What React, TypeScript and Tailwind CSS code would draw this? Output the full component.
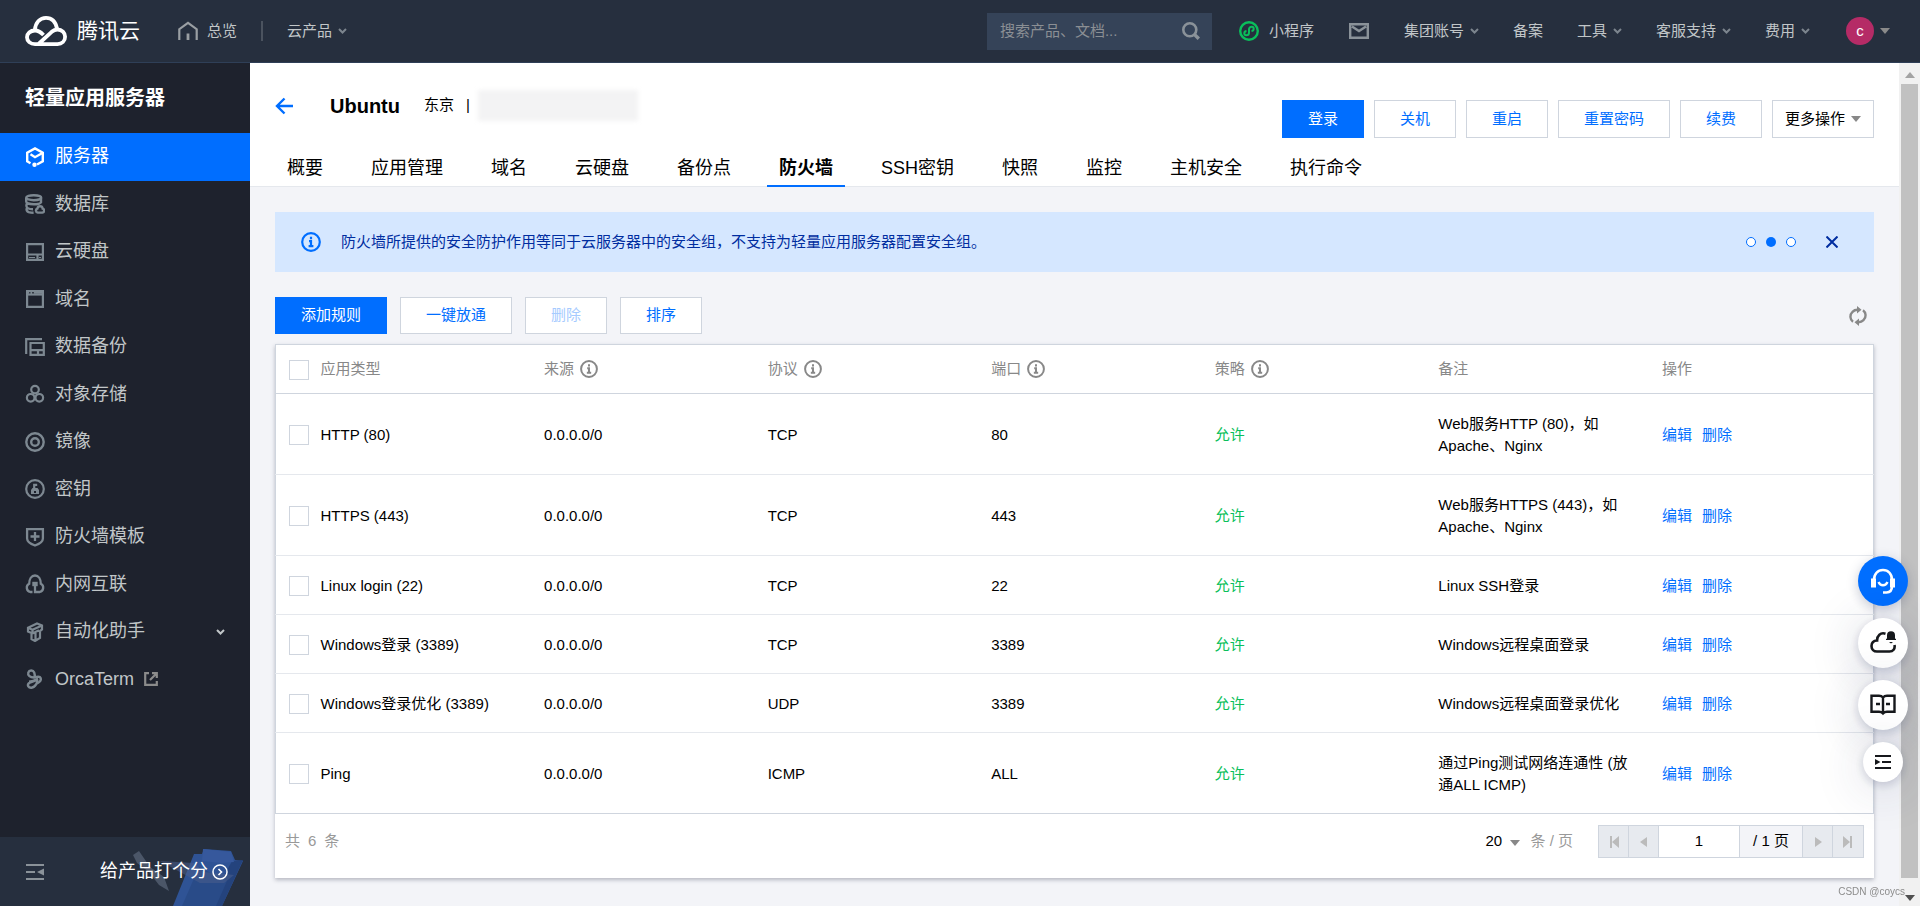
import { useState } from "react";
import type { ReactNode } from "react";

type Regla = {
  app: string;
  protocol: string;
  port: string;
  note: string;
};

const RULES: Regla[] = [
  { app: "HTTP (80)", protocol: "TCP", port: "80", note: "Web服务HTTP (80)，如 Apache、Nginx" },
  { app: "HTTPS (443)", protocol: "TCP", port: "443", note: "Web服务HTTPS (443)，如 Apache、Nginx" },
  { app: "Linux login (22)", protocol: "TCP", port: "22", note: "Linux SSH登录" },
  { app: "Windows登录 (3389)", protocol: "TCP", port: "3389", note: "Windows远程桌面登录" },
  { app: "Windows登录优化 (3389)", protocol: "UDP", port: "3389", note: "Windows远程桌面登录优化" },
  { app: "Ping", protocol: "ICMP", port: "ALL", note: "通过Ping测试网络连通性 (放通ALL ICMP)" },
];

const TABS = ["概要", "应用管理", "域名", "云硬盘", "备份点", "防火墙", "SSH密钥", "快照", "监控", "主机安全", "执行命令"];

const COLUMNS = [
  { label: "应用类型", info: false },
  { label: "来源", info: true },
  { label: "协议", info: true },
  { label: "端口", info: true },
  { label: "策略", info: true },
  { label: "备注", info: false },
  { label: "操作", info: false },
];

/* ---------- icons ---------- */

function Svg({ size = 20, box = 20, stroke = 2, children }: { size?: number; box?: number; stroke?: number; children: ReactNode }) {
  return (
    <svg width={size} height={size} viewBox={`0 0 ${box} ${box}`} fill="none" stroke="currentColor" strokeWidth={stroke} className="shrink-0" aria-hidden="true">
      {children}
    </svg>
  );
}

const ServerIcon = () => (
  <Svg stroke={2.4}>
    <path d="M5.500 16.200 2.200 14.300V5.700L10 1.400l7.800 4.300v8.600L12 17.500" />
    <path d="M5.500 7.300 10 10.200l7-4" />
    <circle cx="9.500" cy="17.800" r="2.200" fill="currentColor" stroke="none" />
  </Svg>
);
const DatabaseIcon = () => (
  <Svg stroke={2.4}>
    <ellipse cx="8.700" cy="3.700" rx="7.500" ry="2.500" />
    <path d="M1.200 4v3.500c0 1.600 3.400 2.800 7.600 2.800 3.400 0 6.400-.8 7.200-2V4M2 10c-.9.800-.8 3.400.8 4.200 1.500.8 3 1 5.200 1M1.800 14.500c-.6 1.500.2 3 1.800 3.600 1.500.5 3 .7 5 .7" />
    <path d="M12.800 18.600a2 2 0 0 1-.4-3.900c.2-1.500 1.200-2.400 2.600-2.400s2.500.9 2.700 2.400a2 2 0 0 1-.3 3.900z" />
  </Svg>
);
const DiskIcon = () => (
  <Svg stroke={2.2}>
    <path d="M2.100 2.100h15.800v15.800H2.100zM2 12.500h16M12.500 13v5" />
    <path d="M4 15.500h6M14 15.500h2" strokeWidth="1" />
  </Svg>
);
const DomainIcon = () => (
  <Svg stroke={2.2}>
    <path d="M2.100 2.100h15.800v15.800H2.100z" />
    <path d="M1 5.500h18" />
    <path d="M1 3h3M5.500 3.500h1.500M9 3h10" strokeWidth="3.500" />
  </Svg>
);
const BackupIcon = () => (
  <Svg stroke={2.2}>
    <path d="M1.200 17V2.100H17" />
    <path d="M5.500 6h13.300v11.800H5.500zM5.500 13.200h13M13 14v3" />
  </Svg>
);
const ObjectIcon = () => (
  <Svg stroke={2.2}>
    <circle cx="10" cy="5.600" r="3.800" />
    <circle cx="5.700" cy="13.800" r="3.800" />
    <circle cx="14.300" cy="13.800" r="3.800" />
  </Svg>
);
const ImageIcon = () => (
  <Svg stroke={2.4}>
    <circle cx="10" cy="10" r="8.700" />
    <circle cx="10" cy="10" r="3.800" />
  </Svg>
);
const KeyIcon = () => (
  <Svg stroke={2.2}>
    <circle cx="10" cy="10" r="8.800" />
    <path d="M9.200 10V5.800h3" />
    <path d="M6 15v-4l1.500-2h5l1.500 2v4H6zm3-3v2h2v-2z" fill="currentColor" fillRule="evenodd" stroke="none" />
  </Svg>
);
const ShieldIcon = () => (
  <Svg stroke={2.3}>
    <path d="M2.100 2.100h15.800v9.400c0 3.500-4 5.600-7.900 7-3.900-1.400-7.900-3.500-7.900-7zM10 5v9M5.500 9.500h9" />
  </Svg>
);
const NetworkIcon = () => (
  <Svg stroke={2.3}>
    <path d="M7.500 18H5.200a4.400 4.400 0 0 1-1-8.200C4.200 5 6.400 1.500 10 1.500S15.800 5 15.800 9.800a4.400 4.400 0 0 1-1 8.200H10v-6" />
    <path d="M7.300 7.800h5.400v4.400H7.300z" fill="currentColor" stroke="none" />
  </Svg>
);
const RobotIcon = () => (
  <Svg stroke={2.2}>
    <path d="M3 5.700 12 1.500l5 2v4L15 9v7l-5 3-3.500-1.800V11L3 9.500zM3 5.700l4.500 2L17 3.500M7.500 8v3.500L14 8.200M10.500 11v7" />
  </Svg>
);
const OrcaIcon = () => (
  <Svg stroke={2.4}>
    <path d="M9.500 8.500C5 8.800 2.500 6 3.300 3.600 4.200 1 8 .8 9.200 3.400c.9 2 .6 3.600.3 5.100zM9.500 8.500c3.500-1.200 5.500-1.300 6.200.6.600 2-1 4-3.700 5.300" />
    <path d="M4 12.800c3-.2 5.500-1 8-2.500 1 3-1.500 8-5.500 8.400-3 .3-4.500-2.500-2.800-4.300 1.500-1.500 4-1 8.300-4.100" />
  </Svg>
);

function Chevron({ className = "" }: { className?: string }) {
  return (
    <svg width="9" height="6" viewBox="0 0 9 6" fill="none" stroke="currentColor" strokeWidth="2" className={className} aria-hidden="true">
      <path d="m1 1 3.500 3.500L8 1" />
    </svg>
  );
}

function Triangle({ className = "" }: { className?: string }) {
  return (
    <svg width="10" height="6" viewBox="0 0 10 6" fill="currentColor" className={className} aria-hidden="true">
      <path d="M0 0h10L5 6z" />
    </svg>
  );
}

function InfoIcon({ size = 20 }: { size?: number }) {
  return (
    <Svg size={size} stroke={2.2}>
      <circle cx="10" cy="10" r="8.800" />
      <path d="M10 4.800v2.400M8 9.200h2v5M7.600 14.200h4.800" />
    </Svg>
  );
}

function Logo() {
  return (
    <svg width="42" height="30" viewBox="0 0 42 30" fill="none" stroke="#fff" strokeWidth="3.800" aria-hidden="true">
      <path d="M18.500 19c-2.500-2.600-4.800-4.500-8.500-4.500C5.300 14.500 2 17.500 2 21.300s3.300 6.800 8 6.800h22.500c4.500 0 7.600-3.200 7.600-7.300s-3.200-7.300-7.600-7.300c-2.500 0-4.200.9-5.800 2.300L13.500 28" />
      <path d="M9.800 14.200C10.600 6.500 15 1.900 21 1.900c5.300 0 9.500 3.400 11 10.600" />
    </svg>
  );
}

const MENU: { label: string; icon: ReactNode }[] = [
  { label: "服务器", icon: <ServerIcon /> },
  { label: "数据库", icon: <DatabaseIcon /> },
  { label: "云硬盘", icon: <DiskIcon /> },
  { label: "域名", icon: <DomainIcon /> },
  { label: "数据备份", icon: <BackupIcon /> },
  { label: "对象存储", icon: <ObjectIcon /> },
  { label: "镜像", icon: <ImageIcon /> },
  { label: "密钥", icon: <KeyIcon /> },
  { label: "防火墙模板", icon: <ShieldIcon /> },
  { label: "内网互联", icon: <NetworkIcon /> },
  { label: "自动化助手", icon: <RobotIcon /> },
  { label: "OrcaTerm", icon: <OrcaIcon /> },
];

/* ---------- top bar ---------- */

function NavItem({ label, arrow = false }: { label: string; arrow?: boolean }) {
  return (
    <button className="flex items-center gap-[6px] whitespace-nowrap">
      {label}
      {arrow && <Chevron className="text-[#7c858e]" />}
    </button>
  );
}

function TopBar() {
  return (
    <header className="flex h-[63px] shrink-0 items-center border-b border-[#2f3f57] bg-[#262f3e] pl-[25px] pr-[30px] text-[15px] text-[#c1c6c8]">
      <a href="#" className="flex items-center gap-[10px] text-[21px] text-white">
        <Logo />
        腾讯云
      </a>
      <a href="#" className="ml-[38px] flex items-center gap-[9px]">
        <span className="text-[#9a9fa3]">
          <Svg stroke={2.2}>
            <path d="M1.300 19V8.200L10 1.800l8.700 6.400V19" />
            <path d="M10 12.500V19" strokeWidth="2.800" />
          </Svg>
        </span>
        总览
      </a>
      <span className="mx-6 h-5 w-[2px] bg-[#4b535f]" />
      <NavItem label="云产品" arrow />

      <label className="ml-auto flex h-[37px] w-[225px] items-center bg-[#354358] pl-[13px] pr-3">
        <input type="text" aria-label="搜索" placeholder="搜索产品、文档..." className="min-w-0 flex-1 bg-transparent outline-none placeholder:text-[#8b8f94]" />
        <span className="text-[#8a9299]">
          <Svg size={18} box={18}>
            <circle cx="7.800" cy="7.800" r="6.500" strokeWidth="2.600" />
            <path d="m12.500 12.500 4.300 4.300" strokeWidth="3.400" />
          </Svg>
        </span>
      </label>

      <button className="ml-[27px] flex items-center gap-[10px] whitespace-nowrap">
        <span className="text-[#0abf5b]">
          <Svg stroke={2.4}>
            <circle cx="10" cy="10" r="8.800" />
            <path d="M7.500 10c-3 .4-2.800 4.300-.2 4.300 1.600 0 2.700-1 2.700-2.600V8.300c0-1.600 1.100-2.600 2.700-2.600 2.600 0 2.800 3.900-.2 4.300" strokeWidth="2" />
          </Svg>
        </span>
        小程序
      </button>
      <button aria-label="消息" className="mx-[35px] text-[#8a9299]">
        <svg width="20" height="16" viewBox="0 0 20 16" fill="none" stroke="currentColor" strokeWidth="2.400" aria-hidden="true">
          <path d="M1.200 1.200h17.600v13.600H1.200zM3 3.500l7 4.500 7-4.500" />
        </svg>
      </button>
      <div className="flex items-center gap-[34px]">
        <NavItem label="集团账号" arrow />
        <NavItem label="备案" />
        <NavItem label="工具" arrow />
        <NavItem label="客服支持" arrow />
        <NavItem label="费用" arrow />
      </div>
      <button className="ml-9 flex items-center gap-[6px]">
        <span className="flex size-7 items-center justify-center rounded-full bg-[#b52b66] text-white">c</span>
        <Triangle className="text-[#8a8a8a]" />
      </button>
    </header>
  );
}

/* ---------- sidebar ---------- */

function Clipboard() {
  return (
    <svg width="120" height="69" viewBox="0 0 120 69" className="absolute bottom-0 right-0" aria-hidden="true">
      <path d="M9 14 3 18l4 8 12 9 10 13 10 6-5-14-14-10z" fill="#4b5668" />
      <path d="M64 17h8l2-5 27 2 4 9 8 1-21 45H43z" fill="#2f5395" />
      <path d="m102 24 11-1-21 46H78z" fill="#24437d" />
      <path d="m73 12 28 3 3 10-13 1-19-2z" fill="#36589c" />
      <path d="m52 69 17-39 28 14-11 25z" fill="#294b88" />
      <path d="m30 24 34 2 10 9 30 3-10 8H70z" fill="#4a5f8c" opacity=".55" />
    </svg>
  );
}

function Sidebar() {
  const [active, setActive] = useState("服务器");
  return (
    <aside className="flex w-[250px] shrink-0 flex-col bg-[#1e222d]">
      <h2 className="flex h-[70px] shrink-0 items-center pl-[25px] text-[20px] font-bold text-white">轻量应用服务器</h2>
      <nav className="grid h-[570px] shrink-0 auto-rows-fr">
        {MENU.map((m) => (
          <a
            key={m.label}
            href="#"
            onClick={() => setActive(m.label)}
            className={
              active === m.label
                ? "flex items-center gap-[10px] bg-[#006eff] px-[25px] text-[18px] text-white"
                : "flex items-center gap-[10px] px-[25px] text-[18px] text-[#c1c6c8]"
            }
          >
            <span className={active === m.label ? "text-white" : "text-[#7d8891]"}>{m.icon}</span>
            {m.label}
            {m.label === "自动化助手" && <Chevron className="ml-auto text-[#c1c6c8]" />}
            {m.label === "OrcaTerm" && (
              <span className="text-[#8b8b8b]">
                <Svg size={14} box={14} stroke={2.2}>
                  <path d="M5 1.200H1.200v11.600h11.600V9M8 1.200h4.800V6M12.500 1.500 6 8" />
                </Svg>
              </span>
            )}
          </a>
        ))}
      </nav>
      <div className="relative mt-auto flex h-[69px] items-center bg-[#262f3e] pl-[25px] pr-[22px]">
        <Clipboard />
        <button aria-label="收起" className="mr-auto text-[#8a9299]">
          <svg width="20" height="16" viewBox="0 0 20 16" fill="currentColor" aria-hidden="true">
            <path d="M1 0h18v2H1zM1 7h9v2H1zM1 14h18v2H1zM12 8l7-3.500v7z" />
          </svg>
        </button>
        <button className="relative flex items-center gap-1 text-[18px] text-white">
          给产品打个分
          <Svg size={16} box={16}>
            <circle cx="8" cy="8" r="7" strokeWidth="1.500" />
            <path d="m6.500 5 3 3-3 3" strokeWidth="1.600" />
          </Svg>
        </button>
      </div>
    </aside>
  );
}

/* ---------- main ---------- */

function OutlineButton({ children, disabled = false }: { children: ReactNode; disabled?: boolean }) {
  return (
    <button disabled={disabled} className="h-full whitespace-nowrap border border-[#cfd5de] bg-white px-[25px] text-[#006eff] disabled:text-[#a6cbff]">
      {children}
    </button>
  );
}

function PrimaryButton({ children }: { children: ReactNode }) {
  return <button className="h-full whitespace-nowrap bg-[#006eff] px-[26px] text-white">{children}</button>;
}

function InstanceHeader() {
  const [tab, setTab] = useState("防火墙");
  return (
    <div className="flex h-[124px] shrink-0 flex-col justify-between border-b border-[#e5e8ed] bg-white">
      <div className="flex items-start justify-between px-[25px]">
        <div className="flex items-center pt-[27px]">
          <button aria-label="返回" className="text-[#006eff]">
            <svg width="18" height="18" viewBox="0 0 18 18" fill="none" stroke="currentColor" strokeWidth="2.400" aria-hidden="true">
              <path d="M18 9H2M9.500 1.500 2 9l7.500 7.500" />
            </svg>
          </button>
          <h1 className="ml-[37px] text-[20px] font-bold">Ubuntu</h1>
          <span className="ml-6">东京</span>
          <span className="ml-3">|</span>
          <span className="ml-2 h-[31px] w-[160px] bg-[#f3f3f4] blur-[2px]" />
        </div>
        <div className="flex h-[75px] gap-[10px] pt-[37px]">
          <PrimaryButton>登录</PrimaryButton>
          <OutlineButton>关机</OutlineButton>
          <OutlineButton>重启</OutlineButton>
          <OutlineButton>重置密码</OutlineButton>
          <OutlineButton>续费</OutlineButton>
          <button className="flex h-full items-center gap-[6px] whitespace-nowrap border border-[#cfd5de] px-3">
            更多操作
            <Triangle className="text-[#888]" />
          </button>
        </div>
      </div>
      <div role="tablist" className="-mb-px flex gap-6 pl-[25px] text-[18px]">
        {TABS.map((t) => (
          <button
            key={t}
            role="tab"
            aria-selected={t === tab}
            onClick={() => setTab(t)}
            className={
              t === tab
                ? "h-[38px] whitespace-nowrap border-b-2 border-[#006eff] px-3 pt-[2px] font-bold"
                : "h-[38px] whitespace-nowrap border-b-2 border-transparent px-3 pt-[2px]"
            }
          >
            {t}
          </button>
        ))}
      </div>
    </div>
  );
}

function Notice() {
  return (
    <div className="flex h-[60px] items-center bg-[#d5e7ff] pl-[26px] pr-9 text-[#002da0]">
      <span className="text-[#006eff]">
        <InfoIcon />
      </span>
      <p className="ml-5">防火墙所提供的安全防护作用等同于云服务器中的安全组，不支持为轻量应用服务器配置安全组。</p>
      <div className="ml-auto flex gap-[10px]">
        <button aria-label="第1条" className="size-[10px] rounded-full border border-[#006eff] bg-white" />
        <button aria-label="第2条" className="size-[10px] rounded-full bg-[#006eff]" />
        <button aria-label="第3条" className="size-[10px] rounded-full border border-[#006eff] bg-white" />
      </div>
      <button aria-label="关闭" className="ml-[30px]">
        <Svg size={12} box={12}>
          <path d="m.5.5 11 11M11.500.5.5 11.500" />
        </Svg>
      </button>
    </div>
  );
}

function Check({ label }: { label: string }) {
  return <input type="checkbox" aria-label={label} className="block size-5 appearance-none border border-[#cfd5de] bg-white checked:bg-[#006eff]" />;
}

function Cell({ className = "", children }: { className?: string; children: ReactNode }) {
  return <td className={`px-3 pb-[17px] pt-[19px] ${className}`}>{children}</td>;
}

function RulesTable() {
  return (
    <table className="w-full table-fixed border border-[#cfd5de] text-left leading-[22px]">
      <thead>
        <tr className="border-b border-[#cfd5de] text-[#888]">
          <th className="w-[33px] pl-[13px] pt-[2px]">
            <Check label="全选" />
          </th>
          {COLUMNS.map((c) => (
            <th key={c.label} className="h-[49px] px-3 font-normal">
              <span className="flex items-center gap-[6px]">
                {c.label}
                {c.info && <InfoIcon size={18} />}
              </span>
            </th>
          ))}
        </tr>
      </thead>
      <tbody>
        {RULES.map((r) => (
          <tr key={r.app} className="border-b border-[#e5e8ed] last:border-[#cfd5de]">
            <td className="pl-[13px] pt-[2px]">
              <Check label={r.app} />
            </td>
            <Cell>{r.app}</Cell>
            <Cell>0.0.0.0/0</Cell>
            <Cell>{r.protocol}</Cell>
            <Cell>{r.port}</Cell>
            <Cell className="text-[#0abf5b]">允许</Cell>
            <Cell>{r.note}</Cell>
            <Cell className="text-[#006eff]">
              <a href="#">编辑</a>
              <a href="#" className="ml-[10px]">
                删除
              </a>
            </Cell>
          </tr>
        ))}
      </tbody>
    </table>
  );
}

function PageButton({ label, d }: { label: string; d: string }) {
  return (
    <button aria-label={label} className="flex w-[30px] items-center justify-center bg-[#e7eaef] text-[#bbb]">
      <svg width="10" height="12" viewBox="0 0 10 12" fill="currentColor" aria-hidden="true">
        <path d={d} />
      </svg>
    </button>
  );
}

function Pager() {
  return (
    <div className="flex h-16 items-start px-[10px] pt-[11px]">
      <div className="flex h-[33px] items-center gap-2 text-[#999]">
        <span>共</span>
        <span>6</span>
        <span>条</span>
      </div>
      <div className="ml-auto flex h-[33px] items-center text-[#999]">
        <label className="relative mr-[10px] flex items-center text-black">
          <select aria-label="每页条数" className="w-[35px] appearance-none bg-transparent outline-none">
            <option>20</option>
            <option>50</option>
          </select>
          <Triangle className="pointer-events-none absolute right-0 top-[10px] text-[#888]" />
        </label>
        条 / 页
      </div>
      <div className="ml-[25px] flex h-[33px] divide-x divide-[#cfd5de] border border-[#cfd5de]">
        <PageButton label="首页" d="M1 0h2v12H1zM10 0v12L3 6z" />
        <PageButton label="上一页" d="M8 1v10L1 6z" />
        <input type="text" aria-label="页码" defaultValue="1" className="w-[81px] bg-white text-center outline-none" />
        <span className="flex w-[63px] items-center justify-center bg-[#f3f4f8]">/ 1 页</span>
        <PageButton label="下一页" d="M2 1v10l7-5z" />
        <PageButton label="末页" d="M9 0H7v12h2zM0 0v12l7-6z" />
      </div>
    </div>
  );
}

function Scrollbar() {
  return (
    <div className="flex w-[21px] shrink-0 flex-col items-center bg-[#f1f1f1]" aria-hidden="true">
      <div className="flex h-[21px] items-center pt-[2px]">
        <Triangle className="rotate-180 text-[#a3a3a3]" />
      </div>
      <div className="w-[17px] flex-1 bg-[#c1c1c1]" />
      <div className="flex h-7 items-center pt-3">
        <Triangle className="text-[#505050]" />
      </div>
    </div>
  );
}

function FloatTools() {
  const round = "flex size-[50px] items-center justify-center rounded-full bg-white text-[#16181c] shadow-[0_5px_50px_rgba(40,50,90,0.22),0_3px_10px_rgba(40,50,90,0.2)]";
  return (
    <div className="fixed bottom-[124px] right-3 flex flex-col items-center gap-3">
      <button aria-label="在线客服" className="flex size-[50px] items-center justify-center rounded-full bg-[#006eff] text-white shadow-[0_3px_12px_rgba(40,50,90,0.25)]">
        <Svg size={26} box={26}>
          <path d="M3.500 10.500v9M22.500 10.500v9" strokeWidth="5" />
          <path d="M4 12c0-6 3.700-10 9-10s9 4 9 10M22 18c0 4-2 6.500-5.500 6.500H13" strokeWidth="2.600" />
          <path d="M8.500 14c1 2.200 2.500 3.200 4.500 3.200s3.500-1 4.500-3.200" strokeWidth="2.400" />
        </Svg>
      </button>
      <button aria-label="云通知" className={round}>
        <Svg size={26} box={26}>
          <path d="M15.500 3.700c-5-1.500-8.500 1.800-8.400 6.800-3.200.2-5.600 2-5.600 5.500 0 3.300 2.300 5.500 5.500 5.500h12.500c3.500 0 5.800-2.500 5-6.500" strokeWidth="2.600" />
          <path d="M16 10h10v-1.200h-1V5.200a4 4 0 0 0-8 0v3.600h-1zM19 12h4l-2 1.500z" fill="currentColor" stroke="none" />
        </Svg>
      </button>
      <button aria-label="文档" className={round}>
        <Svg size={26} box={26}>
          <path d="M13 5.500C12 4.300 10.500 3.800 9 3.800H1.500v16H9c1.800 0 3 .6 4 1.700 1-1.100 2.200-1.700 4-1.700h7.500v-16H17c-1.500 0-3 .5-4 1.700zM13 5.500V22M6 12h4M16 12h4" strokeWidth="2.400" />
        </Svg>
      </button>
      <button aria-label="展开" className="flex size-10 items-center justify-center rounded-full bg-white text-[#16181c] shadow-[0_5px_50px_rgba(40,50,90,0.22),0_3px_10px_rgba(40,50,90,0.2)]">
        <svg width="16" height="14" viewBox="0 0 16 14" fill="currentColor" aria-hidden="true">
          <path d="M0 0h16v2H0zM7 6h9v2H7zM0 12h16v2H0zM0 4l5.500 3L0 10z" />
        </svg>
      </button>
    </div>
  );
}

export default function App() {
  return (
    <div className="flex h-screen flex-col overflow-hidden font-['Liberation_Sans','Noto_Sans_CJK_SC',sans-serif] text-[15px] text-black">
      <TopBar />
      <div className="flex min-h-0 flex-1">
        <Sidebar />
        <main className="flex min-w-0 flex-1 flex-col bg-[#f3f4f8]">
          <InstanceHeader />
          <div className="flex flex-col px-[25px] pt-[25px]">
            <Notice />
            <div className="mt-[25px] flex h-[37px] items-center gap-[13px]">
              <PrimaryButton>添加规则</PrimaryButton>
              <OutlineButton>一键放通</OutlineButton>
              <OutlineButton disabled>删除</OutlineButton>
              <OutlineButton>排序</OutlineButton>
              <button aria-label="刷新" className="ml-auto mr-[6px] text-[#888]">
                <Svg stroke={2.4}>
                  <path d="M5 15.800C1.800 13.500 1.500 8.500 4.500 5.800 6 4.300 7.500 3.800 9.500 3.800M15 4.200c3.200 2.300 3.500 7.300.5 10-1.500 1.500-3 2-5 2" />
                  <path d="m9 0 4.500 3.800L9 7.500zM11 12.500V20l-4.500-3.800z" fill="currentColor" stroke="none" />
                </Svg>
              </button>
            </div>
            <section className="mt-[10px] bg-white shadow-[0_2px_4px_rgba(54,58,80,0.32)]">
              <RulesTable />
              <Pager />
            </section>
          </div>
        </main>
        <Scrollbar />
      </div>
      <FloatTools />
      <span className="fixed bottom-[7px] right-[15px] text-[10px] text-[#8c8c8c]">CSDN @coycs</span>
    </div>
  );
}
